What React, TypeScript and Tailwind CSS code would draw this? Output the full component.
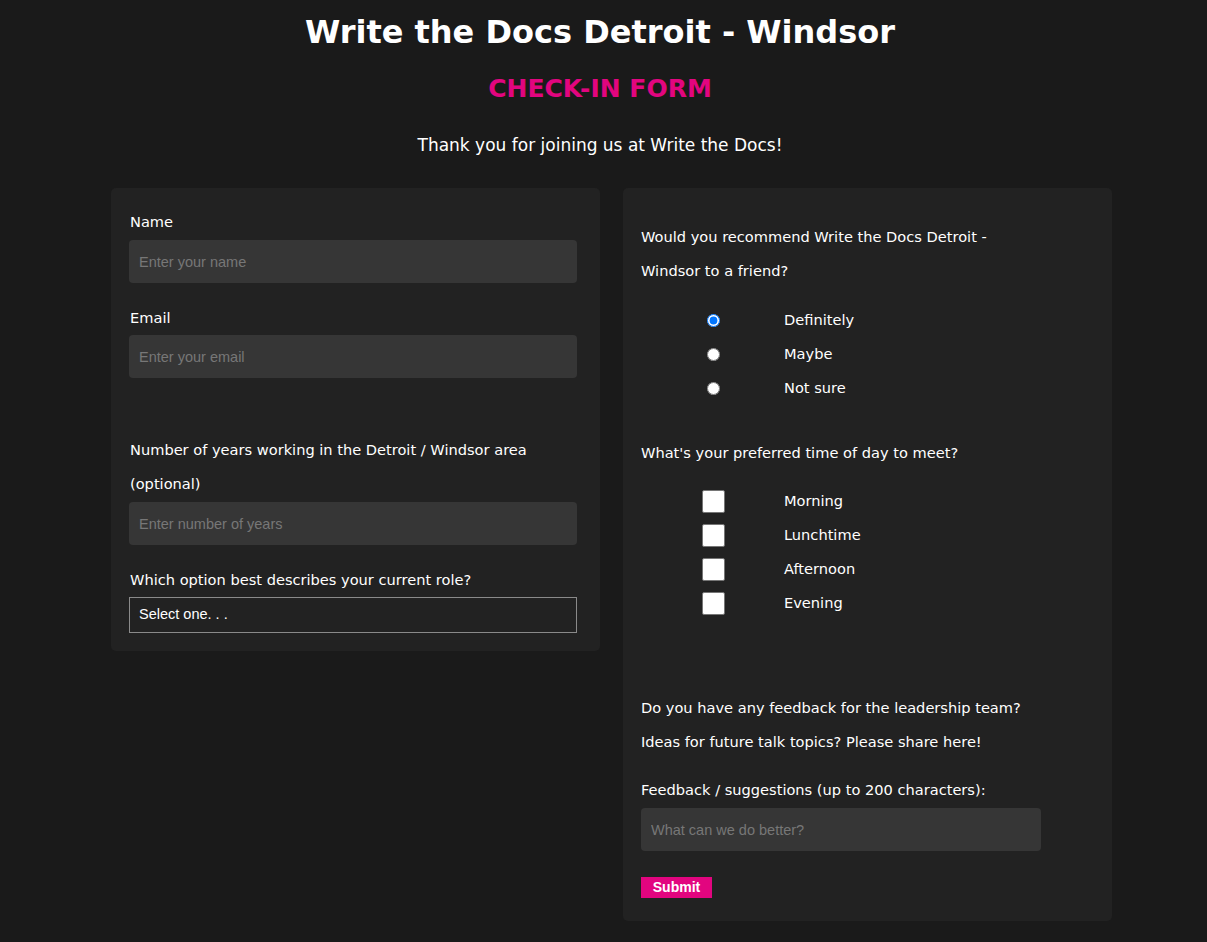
import { useState } from 'react';

const FONT = "font-['DejaVu_Sans',sans-serif]";

const RECOMMEND = ['Definitely', 'Maybe', 'Not sure'];
const TIMES = ['Morning', 'Lunchtime', 'Afternoon', 'Evening'];

const inputCls =
  "block h-[43px] w-full rounded-[4px] bg-[#363636] px-[10px] font-['Liberation_Sans',Arial,sans-serif] text-[14.5px] text-white placeholder:text-[#777] outline-none";

export default function App() {
  const [recommend, setRecommend] = useState('Definitely');
  const [times, setTimes] = useState<string[]>([]);

  const toggleTime = (t: string) =>
    setTimes((prev) => (prev.includes(t) ? prev.filter((x) => x !== t) : [...prev, t]));

  return (
    <div className={`min-h-[942px] bg-[#1a1a1a] text-white ${FONT} pb-[21px]`}>
      {/* header */}
      <div className="flex flex-col items-center pr-[7px]">
        <h1 className="pt-[9px] text-[32px] font-bold leading-[46px]">Write the Docs Detroit - Windsor</h1>
        <h2 className="mt-[18px] text-[25px] font-bold leading-[32px] text-[#e2057f]">CHECK-IN FORM</h2>
        <p className="mt-[27px] text-[17px] leading-[26px]">Thank you for joining us at Write the Docs!</p>
      </div>

      <div className="mt-[30px] flex items-start gap-[23px] pl-[111px]">
        {/* left card */}
        <div className="w-[489px] rounded-[5px] bg-[#222222] pl-[18px] pr-[23px] pt-[17px] pb-[18px] text-[14.6px]">
          <label className="block leading-[34px] pl-px">Name</label>
          <input className={`${inputCls} mt-px`} placeholder="Enter your name" />

          <label className="mt-[18px] block leading-[34px] pl-px">Email</label>
          <input className={inputCls} placeholder="Enter your email" />

          <label className="mt-[55px] block leading-[34px] pl-px">
            Number of years working in the Detroit / Windsor area
            <br />
            (optional)
          </label>
          <input className={`${inputCls} mt-px`} placeholder="Enter number of years" />

          <label className="mt-[18px] block leading-[34px] pl-px">Which option best describes your current role?</label>
          <select className="block h-[36px] w-full appearance-none border border-[#8a8a8a] bg-transparent px-[9px] font-['Liberation_Sans',Arial,sans-serif] text-[14.5px] text-white outline-none">
            <option className="text-black">Select one. . .</option>
          </select>
        </div>

        {/* right card */}
        <div className="w-[489px] rounded-[5px] bg-[#222222] pl-[18px] pr-[71px] pt-[32px] pb-[23px] text-[14.6px]">
          <p className="leading-[34px]">
            Would you recommend Write the Docs Detroit -
            <br />
            Windsor to a friend?
          </p>

          <div className="mt-[15px]">
            {RECOMMEND.map((r) => (
              <label key={r} className="grid h-[34px] grid-cols-[143px_1fr] items-center">
                <span className="flex justify-start pl-[66px]">
                  <input
                    type="radio"
                    name="recommend"
                    checked={recommend === r}
                    onChange={() => setRecommend(r)}
                    className="m-0 h-[13px] w-[13px]"
                  />
                </span>
                <span>{r}</span>
              </label>
            ))}
          </div>

          <p className="mt-[31px] leading-[34px]">What's your preferred time of day to meet?</p>

          <div className="mt-[14px]">
            {TIMES.map((t) => (
              <label key={t} className="grid h-[34px] grid-cols-[143px_1fr] items-center">
                <span className="flex pl-[61px]">
                  <input
                    type="checkbox"
                    checked={times.includes(t)}
                    onChange={() => toggleTime(t)}
                    className="m-0 h-[23px] w-[23px] appearance-none rounded-[2px] border border-[#767676] bg-white checked:bg-[#0075ff]"
                  />
                </span>
                <span>{t}</span>
              </label>
            ))}
          </div>

          <p className="mt-[71px] leading-[34px]">
            Do you have any feedback for the leadership team?
            <br />
            Ideas for future talk topics? Please share here!
          </p>

          <label className="mt-[14px] block leading-[34px]">Feedback / suggestions (up to 200 characters):</label>
          <input className={`${inputCls} mt-px w-[399px]`} placeholder="What can we do better?" />

          <button className="mt-[26px] block h-[21px] w-[71px] bg-[#e2057f] font-['Liberation_Sans',Arial,sans-serif] text-[14px] font-bold leading-[21px] text-white">
            Submit
          </button>
        </div>
      </div>
    </div>
  );
}
